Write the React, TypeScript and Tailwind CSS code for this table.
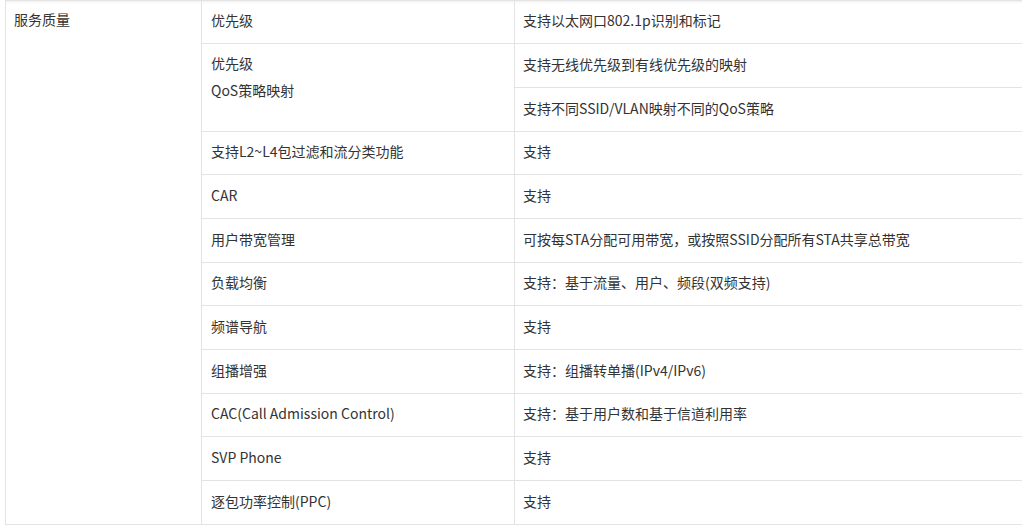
import React from "react";

type Row = { h: string; name: string; value: string };

const lower: Row[] = [
  { h: "h-[43px]", name: "支持L2~L4包过滤和流分类功能", value: "支持" },
  { h: "h-[44px]", name: "CAR", value: "支持" },
  { h: "h-[44px]", name: "用户带宽管理", value: "可按每STA分配可用带宽，或按照SSID分配所有STA共享总带宽" },
  { h: "h-[43px]", name: "负载均衡", value: "支持：基于流量、用户、频段(双频支持)" },
  { h: "h-[44px]", name: "频谱导航", value: "支持" },
  { h: "h-[44px]", name: "组播增强", value: "支持：组播转单播(IPv4/IPv6)" },
  { h: "h-[43px]", name: "CAC(Call Admission Control)", value: "支持：基于用户数和基于信道利用率" },
  { h: "h-[44px]", name: "SVP Phone", value: "支持" },
  { h: "h-[44px]", name: "逐包功率控制(PPC)", value: "支持" },
];

export default function App() {
  return (
    <div
      className="w-[1022px] h-[526px] overflow-hidden bg-white text-[14px] text-[#333333]"
      style={{ fontFamily: '"Noto Sans CJK SC", "Noto Sans", sans-serif' }}
    >
      <div className="ml-[5px] w-[1040px] flex border-t border-[#e3e3e3] shadow-[inset_0_2px_3px_-1px_rgba(0,0,0,0.07)]">
        <div className="w-[197px] shrink-0 border-l border-r border-b border-[#e3e3e3] pl-[8px] pt-[8px] leading-[20px]">
          服务质量
        </div>
        <div className="flex-1 flex flex-col">
          {/* row 1 */}
          <div className="flex h-[43px] border-b border-[#e3e3e3]">
            <div className="w-[313px] shrink-0 border-r border-[#e3e3e3] pl-[9px] pb-[4px] flex items-center leading-[20px]">
              优先级
            </div>
            <div className="flex-1 pl-[8px] pb-[4px] flex items-center leading-[20px]">
              支持以太网口802.1p识别和标记
            </div>
          </div>
          {/* row 2 */}
          <div className="flex h-[88px] border-b border-[#e3e3e3]">
            <div className="w-[313px] shrink-0 border-r border-[#e3e3e3] pl-[9px] pt-[9px] flex flex-col gap-[7px] leading-[20px]">
              <div>优先级</div>
              <div>QoS策略映射</div>
            </div>
            <div className="flex-1 flex flex-col">
              <div className="h-[44px] border-b border-[#e3e3e3] pl-[8px] pb-[4px] flex items-center leading-[20px]">
                支持无线优先级到有线优先级的映射
              </div>
              <div className="h-[43px] pl-[8px] pb-[4px] flex items-center leading-[20px]">
                支持不同SSID/VLAN映射不同的QoS策略
              </div>
            </div>
          </div>
          {lower.map((r, i) => (
            <div key={i} className={`flex ${r.h} border-b border-[#e3e3e3]`}>
              <div className="w-[313px] shrink-0 border-r border-[#e3e3e3] pl-[9px] pb-[4px] flex items-center leading-[20px]">
                {r.name}
              </div>
              <div className="flex-1 pl-[8px] pb-[4px] flex items-center leading-[20px]">
                {r.value}
              </div>
            </div>
          ))}
        </div>
      </div>
    </div>
  );
}
